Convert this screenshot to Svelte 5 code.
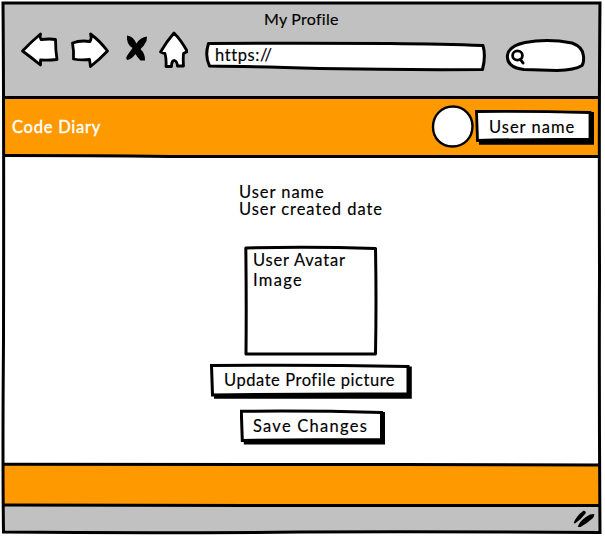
<script>
  const title = 'My Profile';
  const address = 'https://';
</script>

<div class="window">
  <header class="chrome">
    <div class="title"><span class="t-title">{title}</span></div>
    <div class="toolbar">
      <svg class="nav" width="170" height="40" viewBox="18 30 170 40" fill="#fff" stroke="#000" stroke-width="2.8" stroke-linejoin="round" stroke-linecap="round">
        <path d="M22.5 51 Q31 42 40.5 34 Q39.5 37 41 39.5 Q50 38.500 55.500 39.500 Q55.500 50 57 59.500 Q48 60.500 40.500 60 L40.500 65 Q32 58 22.500 51Z" />
        <path d="M107.500 51 Q100 41 90.500 34 Q92 38 90 41.500 Q80 40 72.500 43 Q74 51 73.500 59 Q81 60.500 89.500 59.500 L90.500 66.500 Q99 60 107.500 51Z" />
        <path stroke="none" fill="#000" d="M127 35.500 Q133 36 136.500 43.500 Q140.500 37 147 36.500 L146.500 41 Q144 46 140.500 49 Q145.500 54 145 60.500 L140.500 60.500 Q137 57 135.500 54 Q132 59 127.500 60 Q125 58.500 127.500 55 L132.500 48 Q126 44 127 35.500Z" />
        <path d="M174 33 Q167 41 160.500 52 Q162.500 53.500 165 53.500 Q166.500 59 166 66.500 L171.500 66.500 Q171.500 60.500 174.500 60.500 Q177 61 177.500 66 L183.500 66 Q183 59 183.500 53.500 L187.300 51.500 Q181 40 174 33Z" />
      </svg>
      <div class="address">
        <svg class="sketch" width="282" height="32" viewBox="205 41 282 32" fill="#fff" stroke="#000" stroke-width="3" stroke-linejoin="round">
          <path d="M208.500 43.500 Q300 43 390 43.500 Q445 44 483 45.500 Q486 56 482.500 69.500 Q400 70 320 68.500 Q250 66.500 209.500 66 Q204.500 56 208.500 43.500Z" />
        </svg>
        <span class="t-url">{address}</span>
      </div>
      <svg class="search" width="82" height="36" viewBox="504 38 82 36" fill="#fff" stroke="#000" stroke-width="3" stroke-linecap="round">
        <path d="M525 42.500 Q548 38.500 572 43 Q583 47 583.500 56 Q584 63 582 65.500 Q575 70 557 70.500 L524 69.500 C511 68 506.500 62 507.500 55 Q509 46 525 42.500Z" />
        <ellipse cx="517.500" cy="55.500" rx="4.900" ry="4.600" stroke-width="2.800" />
        <path d="M520.500 59.500 L523 63" stroke-width="3" />
      </svg>
    </div>
  </header>

  <nav class="appbar">
    <span class="t-brand">Code Diary</span>
    <svg class="avatar" width="44" height="44" viewBox="431 104 44 44">
      <path d="M453 106.500 C464 106.500 472.500 115.500 472.500 126 C472.500 138 464 146.500 452.500 146.500 C441 146.500 433 138 433 127 C433 115 442 106.500 453 106.500Z" fill="#fff" stroke="#000" stroke-width="2.400" />
    </svg>
    <button class="user">
      <svg class="sketch" width="120" height="36" viewBox="475 109 120 36">
        <path d="M479 139 V144.700 H594 V112 H589 V139Z" />
        <path d="M476.500 111.500 Q530 111 590 112.500 V139.500 Q530 139 477.500 140.500Z" fill="#fff" stroke="#000" stroke-width="2.800" />
      </svg>
      <span class="t-user">User name</span>
    </button>
  </nav>

  <main>
    <div class="info">User name<br />User created date</div>
    <section class="picture">
      <svg class="sketch" width="134" height="111" viewBox="244 245 134 111">
        <path d="M245.800 248 Q310 246.500 375.500 248.500 Q376.500 300 375.500 354 Q310 354 246 354 Q246.500 300 245.800 248Z" fill="#fff" stroke="#000" stroke-width="3" stroke-linejoin="round" />
      </svg>
      <div><span class="t-avatar">User Avatar</span></div>
      <div><span class="t-image">Image</span></div>
    </section>
    <button class="update">
      <svg class="sketch" width="202" height="36" viewBox="210 363 202 36">
        <path d="M214 394 V398.800 H411.800 V366.500 H407 V394Z" />
        <path d="M211.500 365.500 Q310 364.500 408 366.500 V394 Q310 393.500 212.500 395Z" fill="#fff" stroke="#000" stroke-width="3" />
      </svg>
      <span class="t-update">Update Profile picture</span>
    </button>
    <button class="save">
      <svg class="sketch" width="146" height="36" viewBox="240 409 146 36">
        <path d="M243.800 439 V444.500 H385 V412 H380 V439Z" />
        <path d="M241.300 411.300 Q310 410.500 381.500 412.500 V439.500 Q310 439.500 242.300 440.500Z" fill="#fff" stroke="#000" stroke-width="3" />
      </svg>
      <span class="t-save">Save Changes</span>
    </button>
  </main>

  <footer></footer>
  <div class="status">
    <svg width="24" height="18" viewBox="572 509 24 18">
      <path d="M573.700 523 Q576 516 583.500 510.700 Q586.500 510.500 585.500 513.500 Q581 519.500 575 523.500Z M577.700 526.500 Q580.500 519.500 590 514.500 L594 514 Q595 515 593 518 Q587 523.500 579.500 527.500Z" />
    </svg>
  </div>

  <svg class="sketch frame" width="605" height="538" viewBox="0 0 605 538" fill="none" stroke="#000" stroke-width="3">
    <path d="M3 3 Q300 2.500 600 3 Q599 100 599.500 270 Q599 400 600 532.500 Q450 531.500 300 532 Q150 533.500 3.500 532 Q2.500 460 3.500 340 Q4 120 3 3Z" />
    <path d="M3 97.500 H599 M3 155.500 Q90 155.500 170 156.500 L599 156.500 M3 464.300 L400 464.500 L599 465 M3 505 Q120 505.500 250 505.500 H599" stroke-width="2.900" />
  </svg>
</div>

<style>
  :global(body) { background: #fff; overflow: hidden; }
  .window {
    position: relative;
    box-sizing: border-box;
    width: 605px;
    height: 538px;
    padding: 3px 5px 5px 3px;
    display: flex;
    flex-direction: column;
    font: 16.5px/20px Lato, "Open Sans", sans-serif;
    color: #000;
    -webkit-text-stroke: 0.15px currentColor;
  }
  svg { display: block; flex: none; }
  span { position: relative; white-space: nowrap; }
  .sketch { position: absolute; inset: 0; }
  .frame { pointer-events: none; }
  .chrome { height: 94px; background: #c1c1c1; display: flex; flex-direction: column; }
  .title { padding: 6px 0 0 261px; font-size: 16px; }
  .toolbar { display: flex; align-items: flex-start; padding-left: 15px; padding-top: 1px; }
  .nav { margin-right: 17px; }
  .address { position: relative; width: 282px; height: 32px; margin-top: 11px; margin-right: 17px; padding: 4px 0 0 10px; box-sizing: border-box; }
  .search { margin-top: 8px; }
  .appbar { height: 60px; background: #ff9900; display: flex; align-items: flex-start; }
  .t-brand { color: #fff; margin: 20px 0 0 9px; -webkit-text-stroke: 0.4px #fff; }
  .avatar { margin-left: auto; margin-top: 7px; }
  button { position: relative; box-sizing: border-box; padding: 7px 0 9px 14px; margin: 0; border: 0; background: none; font: inherit; color: inherit; text-align: left; height: 36px; display: block; -webkit-text-stroke: inherit; }
  .user { width: 120px; margin: 12px 5px 0 0; padding: 8px 0 8px 14px; }
  main { height: 307px; background: #fff; display: flex; flex-direction: column; box-sizing: border-box; padding: 25px 0 0 0; }
  .info { margin-left: 236px; line-height: 17px; height: 63px; padding-top: 2px; box-sizing: border-box; }
  .picture { position: relative; box-sizing: border-box; width: 134px; height: 111px; margin-left: 241px; padding: 5px 0 0 9px; }
  .update { width: 202px; margin: 7px 0 0 207px; }
  .save { width: 146px; margin: 10px 0 0 237px; padding-left: 13px; }
  footer { height: 42px; background: #ff9900; }
  .status { height: 27px; background: #c1c1c1; display: flex; justify-content: flex-end; padding: 3px 4px 0 0; box-sizing: border-box; }
  .t-title { letter-spacing: 0.25px; }
  .t-url { letter-spacing: 0.6px; }
  .t-brand { letter-spacing: 0.75px; }
  .t-user { letter-spacing: 1px; }
  .info { letter-spacing: 0.95px; }
  .t-avatar { letter-spacing: 0.8px; }
  .t-image { letter-spacing: 1.3px; }
  .t-update { letter-spacing: 0.55px; }
  .t-save { letter-spacing: 1.25px; }
</style>
